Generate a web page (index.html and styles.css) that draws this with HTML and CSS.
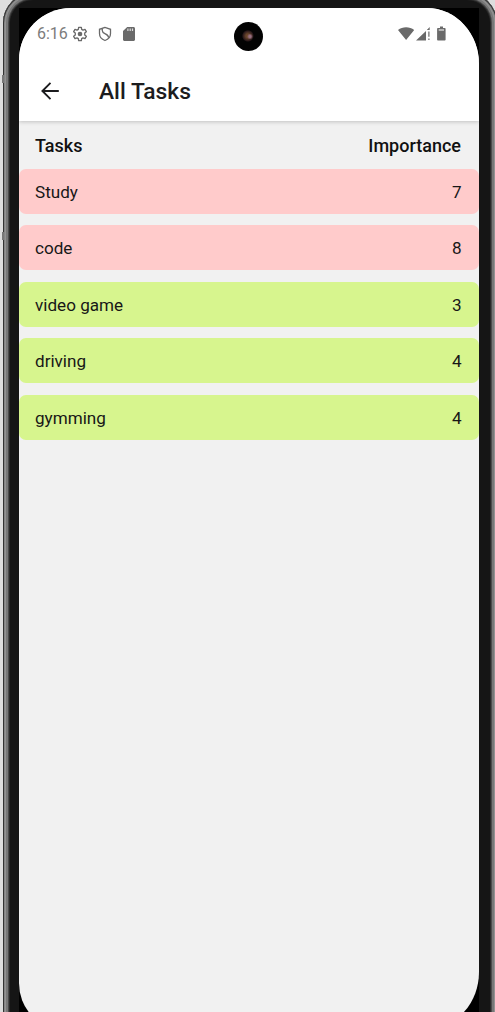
FILE: index.html
```html
<!DOCTYPE html>
<html lang="en">
<head>
<meta charset="utf-8">
<title>All Tasks</title>
<link rel="stylesheet" href="styles.css">
</head>
<body>
<div class="device">
  <div class="bezel">
    <div class="well">
      <main class="screen">
        <header class="top">
          <div class="status">
            <span class="clock">6:16</span>
            <svg class="gear" width="16" height="16" viewBox="0 0 24 24" fill="none" stroke="currentColor" stroke-width="2" stroke-linejoin="round"><path d="M10 2h4l.5 3 2 1.200 3-1.200 2 3.500-2.400 2v3l2.400 2-2 3.500-3-1.200-2 1.200-.5 3h-4l-.5-3-2-1.200-3 1.200-2-3.500 2.400-2v-3l-2.400-2 2-3.500 3 1.200 2-1.200z"/><circle cx="12" cy="12" r="3.500" fill="currentColor" stroke="none"/></svg>
            <svg class="shield" width="14" height="16" viewBox="0 0 14 16" fill="none" stroke="currentColor" stroke-width="1.300"><path d="M7 1.400 1.500 3.300v4.200c0 3.300 2.300 5.900 5.500 7 3.200-1.100 5.500-3.700 5.500-7V3.300zM4.300 2.500v2.200c0 1.700 1.100 2.300 3 3.200 2 .9 3.200 1.800 3.200 3.600"/></svg>
            <svg class="card" width="12" height="14" viewBox="0 0 12 14"><path fill="currentColor" d="M4.200 0h6.300C11.300 0 12 .7 12 1.500v11c0 .8-.7 1.500-1.500 1.500h-9C.7 14 0 13.300 0 12.500V4z"/><path stroke="#ddd" stroke-width="1.200" d="M4.900 1.500v2.500M7.200 1.500v2.500M9.500 1.500v2.500"/></svg>
            <svg class="signals" width="49" height="16" viewBox="0 0 49 16" fill="currentColor"><path d="M0 4C4.500.2 11.700.2 16.200 4L8.100 14zM18 14.500 28 5v9.500zM28.800 3.900 31.700 1v2.900z"/><path opacity=".7" d="M30 5.600h1.700v5.200H30zM30 12.400h1.700V14H30z"/><path d="M42 .5h3V2h1.800c.4 0 .8.400.8.800v10.900c0 .5-.4.800-.8.800h-6.900c-.5 0-.8-.3-.8-.8V2.800c0-.4.400-.8.800-.8H42z"/><path d="M40.700 3.400H46v1.100h-5.300z" fill="#fff"/></svg>
          </div>
          <div class="appbar">
            <svg width="20" height="20" viewBox="0 0 20 20" fill="none" stroke="#1c1c1e" stroke-width="1.900"><path d="M18.800 10H2.500M10.500 1.900 2.400 10l8.100 8.100"/></svg>
            <h1>All Tasks</h1>
          </div>
        </header>
        <div class="heading"><span>Tasks</span><span>Importance</span></div>
        <ul class="tasks">
          <li class="high"><span>Study</span><span>7</span></li>
          <li class="high"><span>code</span><span>8</span></li>
          <li class="low"><span>video game</span><span>3</span></li>
          <li class="low"><span>driving</span><span>4</span></li>
          <li class="low"><span>gymming</span><span>4</span></li>
        </ul>
      </main>
    </div>
  </div>
  <div class="camera"></div>
  <i class="button upper"></i><i class="button lower"></i>
</div>
</body>
</html>
```
FILE: styles.css
```css
* { box-sizing: border-box; }
body { margin: 0; background: #dedede; font-family: Roboto, sans-serif; }
.device {
  position: relative;
  width: 495px;
  height: 1012px;
  padding-left: 3px;
  overflow: hidden;
}
.bezel {
  width: 494px;
  height: 1100px;
  margin-top: -7px;
  padding: 15px 0 0 16px;
  border-radius: 30px;
  background: #151515;
  box-shadow: inset 0 0 0 1px #333, inset 0 0 0 2px #858585, inset 0 0 0 3px #929292, inset 0 0 0 5px #777, inset 0 0 0 6px #4b4b4b, inset 0 0 0 7px #292929;
}
.well { width: 460px; height: 1060px; background: #000; }
.screen {
  width: 460px;
  height: 1020px;
  overflow: hidden;
  border-radius: 52px 52px 50px 41px / 52px 56px 56px 45px;
  background: #f1f1f1;
}
.top {
  position: relative;
  height: 113px;
  background: #fff;
  box-shadow: 0 1px 4px rgba(0, 0, 0, .2);
}
.status {
  display: flex;
  align-items: center;
  height: 51px;
  padding: 0 31px 0 18px;
  color: #6a6a6a;
}
.clock { width: 35px; font-size: 16px; color: #7c7c7c; }
.shield { margin-left: 10px; }
.card { margin-left: 11px; }
.signals { margin-left: auto; position: relative; left: -1px; }
.appbar { display: flex; align-items: center; height: 62px; padding: 2px 0 0 21px; gap: 39px; }
h1 { margin: 0; font-size: 22.800px; font-weight: 500; color: #1c1c1e; }
.heading {
  display: flex;
  align-items: center;
  justify-content: space-between;
  height: 47.500px;
  padding: 2px 18px 0 16px;
  font-size: 18px;
  font-weight: 500;
  color: #111;
}
.tasks { display: grid; gap: 11.500px; margin: 0; padding: 0; list-style: none; }
.tasks li {
  display: flex;
  align-items: center;
  justify-content: space-between;
  height: 45px;
  padding: 1px 17.500px 0 16px;
  border-radius: 7px;
  font-size: 17.100px;
  color: #171717;
}
.high { background: #ffcbcb; }
.low { background: #d7f58e; }
.camera {
  position: absolute;
  left: 234px;
  top: 22px;
  width: 29px;
  height: 29px;
  border-radius: 50%;
  background: radial-gradient(circle at 55% 50%, #987083 0 1px, transparent 3px), radial-gradient(circle at 48% 48%, #69452b 0 2px, #29181a 5px, #030303 6px);
}
.button { position: absolute; left: 2px; width: 2px; height: 8px; background: #777; }
.upper { top: 75px; }
.lower { top: 232px; }
```
